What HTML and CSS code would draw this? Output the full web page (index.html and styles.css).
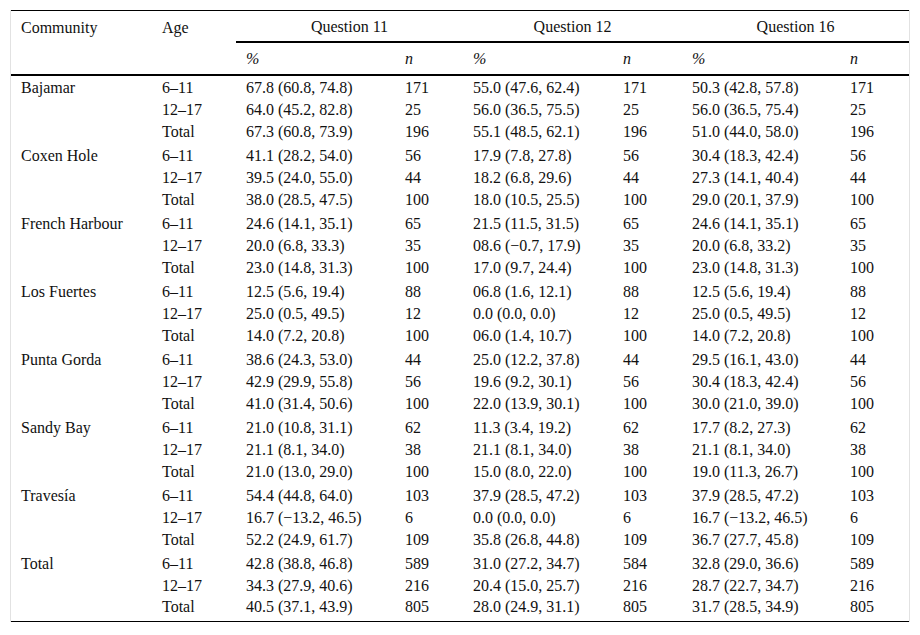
FILE: index.html
```html
<!DOCTYPE html>
<html>
<head>
<meta charset="utf-8">
<link rel="stylesheet" href="styles.css">
</head>
<body>
<div class="frame">
<table class="data">
<colgroup>
<col class="c-com"><col class="c-age"><col class="c-p1"><col class="c-n1"><col class="c-p2"><col class="c-n2"><col class="c-p3"><col class="c-n3">
</colgroup>
<thead>
<tr class="h1">
<th rowspan="2" class="left">Community</th>
<th rowspan="2" class="left">Age</th>
<th colspan="2" class="q">Question 11</th>
<th colspan="2" class="q">Question 12</th>
<th colspan="2" class="q">Question 16</th>
</tr>
<tr class="h2">
<th><em>%</em></th><th><em>n</em></th>
<th><em>%</em></th><th><em>n</em></th>
<th><em>%</em></th><th><em>n</em></th>
</tr>
</thead>
<tbody>
<tr class="first"><td>Bajamar</td><td>6–11</td><td>67.8 (60.8, 74.8)</td><td>171</td><td>55.0 (47.6, 62.4)</td><td>171</td><td>50.3 (42.8, 57.8)</td><td>171</td></tr>
<tr><td></td><td>12–17</td><td>64.0 (45.2, 82.8)</td><td>25</td><td>56.0 (36.5, 75.5)</td><td>25</td><td>56.0 (36.5, 75.4)</td><td>25</td></tr>
<tr><td></td><td>Total</td><td>67.3 (60.8, 73.9)</td><td>196</td><td>55.1 (48.5, 62.1)</td><td>196</td><td>51.0 (44.0, 58.0)</td><td>196</td></tr>

<tr class="grp"><td>Coxen Hole</td><td>6–11</td><td>41.1 (28.2, 54.0)</td><td>56</td><td>17.9 (7.8, 27.8)</td><td>56</td><td>30.4 (18.3, 42.4)</td><td>56</td></tr>
<tr><td></td><td>12–17</td><td>39.5 (24.0, 55.0)</td><td>44</td><td>18.2 (6.8, 29.6)</td><td>44</td><td>27.3 (14.1, 40.4)</td><td>44</td></tr>
<tr><td></td><td>Total</td><td>38.0 (28.5, 47.5)</td><td>100</td><td>18.0 (10.5, 25.5)</td><td>100</td><td>29.0 (20.1, 37.9)</td><td>100</td></tr>

<tr class="grp"><td>French Harbour</td><td>6–11</td><td>24.6 (14.1, 35.1)</td><td>65</td><td>21.5 (11.5, 31.5)</td><td>65</td><td>24.6 (14.1, 35.1)</td><td>65</td></tr>
<tr><td></td><td>12–17</td><td>20.0 (6.8, 33.3)</td><td>35</td><td>08.6 (−0.7, 17.9)</td><td>35</td><td>20.0 (6.8, 33.2)</td><td>35</td></tr>
<tr><td></td><td>Total</td><td>23.0 (14.8, 31.3)</td><td>100</td><td>17.0 (9.7, 24.4)</td><td>100</td><td>23.0 (14.8, 31.3)</td><td>100</td></tr>

<tr class="grp"><td>Los Fuertes</td><td>6–11</td><td>12.5 (5.6, 19.4)</td><td>88</td><td>06.8 (1.6, 12.1)</td><td>88</td><td>12.5 (5.6, 19.4)</td><td>88</td></tr>
<tr><td></td><td>12–17</td><td>25.0 (0.5, 49.5)</td><td>12</td><td>0.0 (0.0, 0.0)</td><td>12</td><td>25.0 (0.5, 49.5)</td><td>12</td></tr>
<tr><td></td><td>Total</td><td>14.0 (7.2, 20.8)</td><td>100</td><td>06.0 (1.4, 10.7)</td><td>100</td><td>14.0 (7.2, 20.8)</td><td>100</td></tr>

<tr class="grp"><td>Punta Gorda</td><td>6–11</td><td>38.6 (24.3, 53.0)</td><td>44</td><td>25.0 (12.2, 37.8)</td><td>44</td><td>29.5 (16.1, 43.0)</td><td>44</td></tr>
<tr><td></td><td>12–17</td><td>42.9 (29.9, 55.8)</td><td>56</td><td>19.6 (9.2, 30.1)</td><td>56</td><td>30.4 (18.3, 42.4)</td><td>56</td></tr>
<tr><td></td><td>Total</td><td>41.0 (31.4, 50.6)</td><td>100</td><td>22.0 (13.9, 30.1)</td><td>100</td><td>30.0 (21.0, 39.0)</td><td>100</td></tr>

<tr class="grp"><td>Sandy Bay</td><td>6–11</td><td>21.0 (10.8, 31.1)</td><td>62</td><td>11.3 (3.4, 19.2)</td><td>62</td><td>17.7 (8.2, 27.3)</td><td>62</td></tr>
<tr><td></td><td>12–17</td><td>21.1 (8.1, 34.0)</td><td>38</td><td>21.1 (8.1, 34.0)</td><td>38</td><td>21.1 (8.1, 34.0)</td><td>38</td></tr>
<tr><td></td><td>Total</td><td>21.0 (13.0, 29.0)</td><td>100</td><td>15.0 (8.0, 22.0)</td><td>100</td><td>19.0 (11.3, 26.7)</td><td>100</td></tr>

<tr class="grp"><td>Travesía</td><td>6–11</td><td>54.4 (44.8, 64.0)</td><td>103</td><td>37.9 (28.5, 47.2)</td><td>103</td><td>37.9 (28.5, 47.2)</td><td>103</td></tr>
<tr><td></td><td>12–17</td><td>16.7 (−13.2, 46.5)</td><td>6</td><td>0.0 (0.0, 0.0)</td><td>6</td><td>16.7 (−13.2, 46.5)</td><td>6</td></tr>
<tr><td></td><td>Total</td><td>52.2 (24.9, 61.7)</td><td>109</td><td>35.8 (26.8, 44.8)</td><td>109</td><td>36.7 (27.7, 45.8)</td><td>109</td></tr>

<tr class="grp"><td>Total</td><td>6–11</td><td>42.8 (38.8, 46.8)</td><td>589</td><td>31.0 (27.2, 34.7)</td><td>584</td><td>32.8 (29.0, 36.6)</td><td>589</td></tr>
<tr><td></td><td>12–17</td><td>34.3 (27.9, 40.6)</td><td>216</td><td>20.4 (15.0, 25.7)</td><td>216</td><td>28.7 (22.7, 34.7)</td><td>216</td></tr>
<tr class="last"><td></td><td>Total</td><td>40.5 (37.1, 43.9)</td><td>805</td><td>28.0 (24.9, 31.1)</td><td>805</td><td>31.7 (28.5, 34.9)</td><td>805</td></tr>
</tbody>
</table>
</div>
</body>
</html>
```
FILE: styles.css
```css
html, body {
  margin: 0;
  padding: 0;
  background: #fff;
}
body {
  font-family: "Liberation Serif", "Times New Roman", serif;
  font-size: 16px;
  line-height: 18px;
  color: #111;
}
.frame {
  margin: 10px 0 0 10px;
  width: 898px;
  border-left: 1px solid #e2e2e2;
  border-right: 1px solid #e2e2e2;
}
.data {
  width: 898px;
  border-collapse: collapse;
  table-layout: fixed;
  border-top: 1px solid #000;
  border-bottom: 1px solid #000;
}
.c-com { width: 141px; }
.c-age { width: 84px; }
.c-p1 { width: 159px; }
.c-n1 { width: 68px; }
.c-p2 { width: 150px; }
.c-n2 { width: 69px; }
.c-p3 { width: 158px; }
.c-n3 { width: 69px; }

th, td {
  box-sizing: border-box;
}
th {
  font-weight: normal;
  text-align: left;
  padding: 0 0 0 10px;
  white-space: nowrap;
}
.h1 th {
  height: 31px;
  vertical-align: middle;
}
.h1 th.left {
  vertical-align: top;
  padding-top: 8px;
  border-bottom: 2px solid #000;
}
.h1 th.q {
  text-align: center;
  padding: 2px 0 0 0;
  border-bottom: 2px solid #000;
}
.h2 th {
  height: 33px;
  padding-top: 2px;
  border-bottom: 2px solid #000;
}
th em {
  font-style: italic;
}
td {
  padding: 0 0 0 10px;
  height: 22px;
  vertical-align: middle;
  white-space: nowrap;
}
tr.first td {
  height: 24px;
  padding-top: 2px;
}
tr.grp td {
  height: 24px;
  padding-top: 2px;
}
tr.last td {
  height: 25px;
  padding-bottom: 3px;
}
```
